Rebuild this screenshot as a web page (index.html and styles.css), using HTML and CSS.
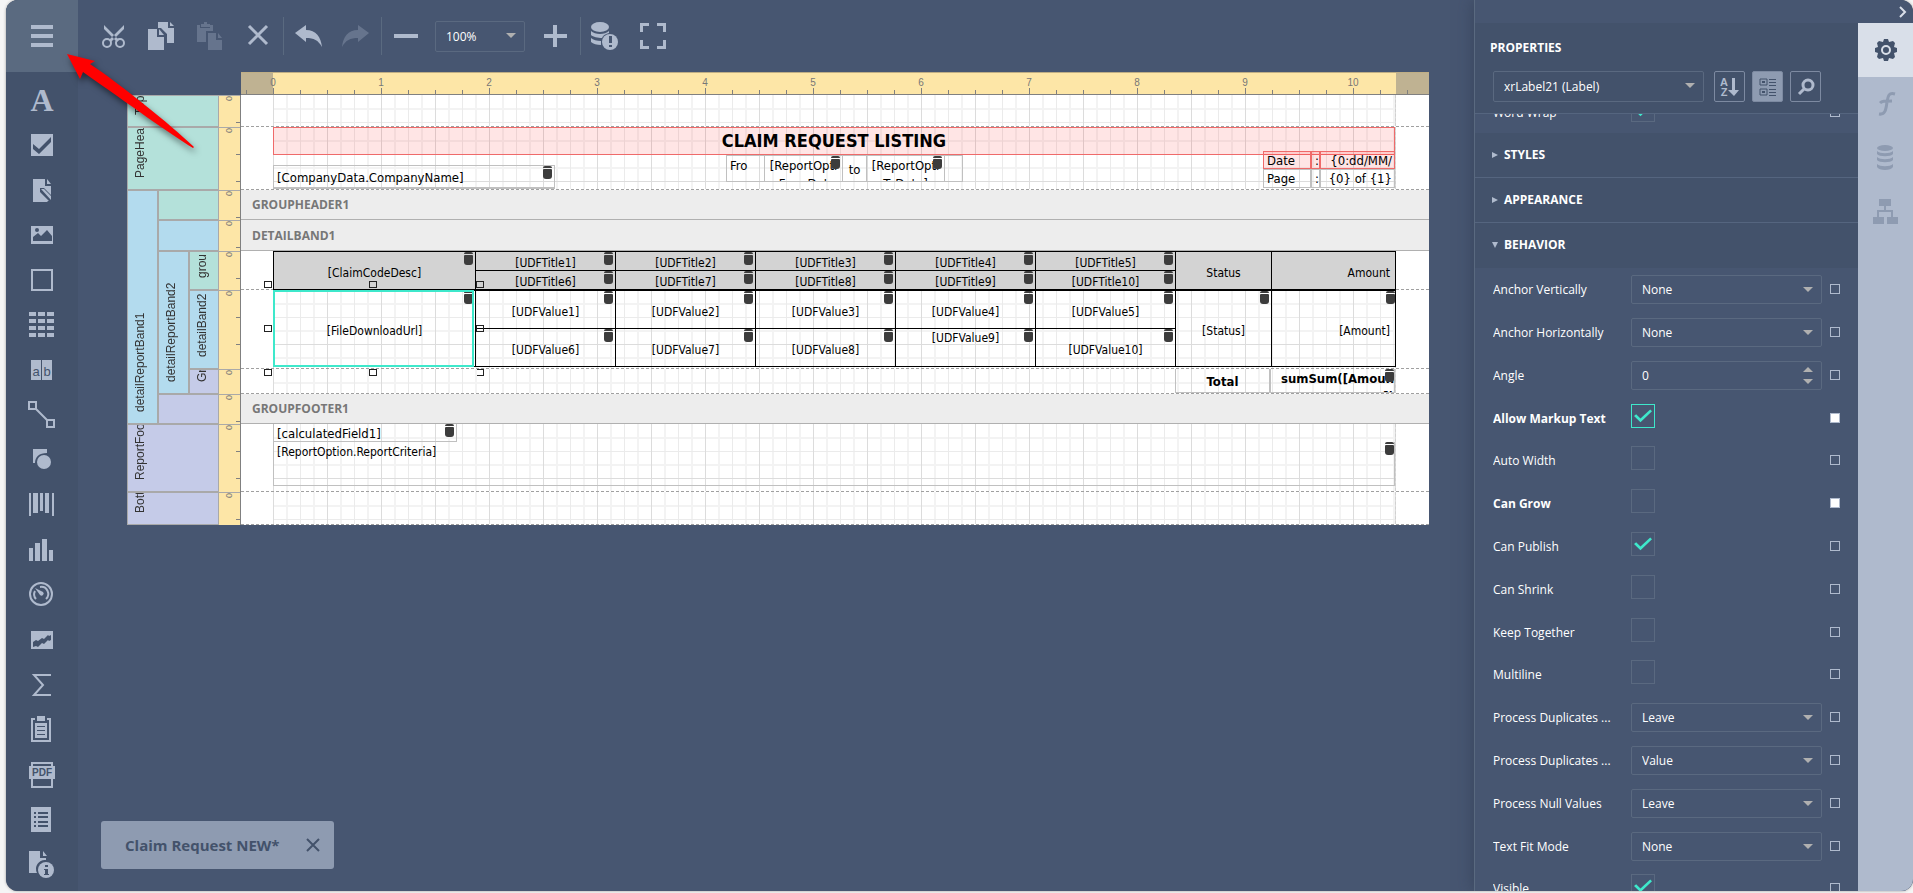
FILE: index.html
```
<!DOCTYPE html>
<html lang="en">
<head>
    <title>Report Designer</title>
    <meta charset="utf-8">
    <meta name="viewport" content="width=device-width, initial-scale=1.0">
    <link rel="stylesheet" href="styles.css">
</head>
<body>
    <div class="designer">
        <nav class="toolbox">
            <button class="menu-button" aria-label="Menu">
                <svg width="24" height="24" viewBox="0 0 24 24"><path d="M1 1h22v4H1zM1 10h22v4H1zM1 19h22v4H1z"/></svg>
            </button>
            <div class="tools">
                <button class="tool" aria-label="Label"><svg viewBox="0 0 28 28"><text class="glyph-a" x="14" y="25">A</text></svg></button>
                <button class="tool" aria-label="Check Box"><svg viewBox="0 0 28 28"><path d="M3 3h22v22H3z"/><path class="cut" d="M5 13l6 5 12-12v5L11 23l-6-5z"/></svg></button>
                <button class="tool" aria-label="Rich Text"><svg viewBox="0 0 28 28"><path d="M5 3h12v7h6v16H5z"/><path d="M19 3l4 5h-4z"/><path class="cut" d="M12 12h4l8 8v7h-3l-9-9z"/><path d="M13 13l3 0 7 7v4zM12 16l9 9h-4l-5-5z"/></svg></button>
                <button class="tool" aria-label="Picture Box"><svg viewBox="0 0 28 28"><path d="M3 5h22v18H3z"/><circle class="cut" cx="9" cy="9" r="2"/><path class="cut" d="M5 20v-4l5-4 3 3 6-6 5 6v5z"/></svg></button>
                <button class="tool" aria-label="Panel"><svg viewBox="0 0 28 28"><path class="line" d="M4 4h20v20H4z"/></svg></button>
                <button class="tool" aria-label="Table"><svg viewBox="0 0 28 28"><path d="M1 1h7v4H1zM10 1h7v4h-7zM19 1h7v4h-7zM1 8h7v4H1zM10 8h7v4h-7zM19 8h7v4h-7zM1 15h7v4H1zM10 15h7v4h-7zM19 15h7v4h-7zM1 22h7v4H1zM10 22h7v4h-7zM19 22h7v4h-7z"/></svg></button>
                <button class="tool" aria-label="Character Comb"><svg viewBox="0 0 28 28"><path d="M3 4h10v20H3zM14 4h10v20H14z"/><text class="glyph-s" x="8" y="20">a</text><text class="glyph-s" x="19" y="20">b</text></svg></button>
                <button class="tool" aria-label="Line"><svg viewBox="0 0 28 28"><path class="line" d="M1 1h7v7H1zM19 19h7v7h-7zM8 8l11 11"/></svg></button>
                <button class="tool" aria-label="Shape"><svg viewBox="0 0 28 28"><path d="M5 3h14v4C11 7 7 11 7 17H5z"/><circle cx="16" cy="16" r="7"/></svg></button>
                <button class="tool" aria-label="Bar Code"><svg viewBox="0 0 28 28"><path d="M1 2h2v23H1zM5 2h5v20H5zM12 2h3v18h-3zM17 2h4v20h-4zM24 2h2v23h-2z"/></svg></button>
                <button class="tool" aria-label="Chart"><svg viewBox="0 0 28 28"><path d="M1 12h4v13H1zM7 7h5v18H7zM14 3h5v22h-5zM21 14h4v11h-4z"/></svg></button>
                <button class="tool" aria-label="Gauge"><svg viewBox="0 0 28 28"><circle class="line" cx="13" cy="13" r="11"/><path class="line" d="M8 18a7 7 0 0 1-1-8M12 6a7 7 0 0 1 6 12"/><path d="M7 7l8 4a2 2 0 1 1-3 3z"/></svg></button>
                <button class="tool" aria-label="Sparkline"><svg viewBox="0 0 28 28"><path d="M3 5h22v18H3z"/><path class="cut" d="M5 16l3-2 2 1 4-3 2 1 4-4 1 1 2-1v5l-2 1-1-1-4 4-2-1-4 4-2-1-3 1z"/></svg></button>
                <button class="tool" aria-label="Sum"><svg viewBox="0 0 28 28"><path class="line" d="M23 4H6l9 10-9 10h17"/></svg></button>
                <button class="tool" aria-label="Page Summary"><svg viewBox="0 0 28 28"><path class="line" d="M7 3H4v22h18V3h-3"/><path d="M9 0h8v5H9zM7 7h12v15H7z"/><path class="cut" d="M9 10h8v1H9zM9 14h8v1H9zM9 18h8v1H9z"/></svg></button>
                <button class="tool" aria-label="PDF Content"><svg viewBox="0 0 28 28"><path class="line" d="M4 2h20v24H4z"/><path d="M1 5h26v13H1z"/><text class="glyph-p" x="14" y="15">PDF</text></svg></button>
                <button class="tool" aria-label="Table of Contents"><svg viewBox="0 0 28 28"><path d="M3 1h20v25H3z"/><path class="cut" d="M6 6h2v2H6zM10 6h10v2H10zM6 10h2v2H6zM10 10h10v2H10zM6 15h2v2H6zM10 15h10v2H10zM6 19h2v2H6zM10 19h10v2H10z"/></svg></button>
                <button class="tool" aria-label="Page Info"><svg viewBox="0 0 28 28"><path d="M1 0h11v7h6v2a9 9 0 0 0-9 13H1zM15 0l4 5h-4z"/><circle cx="18" cy="19" r="8"/><path class="cut" d="M17 14h3v2h-3zM16 18h4v5h1v1h-5v-1h1v-4h-1z"/></svg></button>
            </div>
        </nav>

        <main class="workspace">
            <div class="toolbar">
                <button class="action" aria-label="Cut"><svg viewBox="0 0 32 32"><circle class="line" cx="9" cy="23" r="4"/><circle class="line" cx="22" cy="23" r="4"/><path d="M6 5l13 13 2 2-2 2-5-5L6 9zM26 5L13 18l-2 2 2 2 5-5 8-8z"/></svg></button>
                <button class="action" aria-label="Copy"><svg viewBox="0 0 32 32"><path d="M12 2h10v6h6v15h-7V14l-6-6h-3zM24 2l4 4h-4z"/><path d="M2 9h9v8h7v13H2z"/><path d="M13 9l5 6h-5z"/></svg></button>
                <button class="action faded" aria-label="Paste"><svg viewBox="0 0 32 32"><path d="M3 5h3v3h10V5h3v6h-7v11H3zM7 4h3V2h3v2h3v3H7z"/><path d="M14 13h8v7h6v10H14zM24 13l4 5h-4z"/></svg></button>
                <button class="action" aria-label="Delete"><svg viewBox="0 0 32 32"><path class="bold-line" d="M7 6l18 18M25 6L7 24"/></svg></button>
                <span class="separator"></span>
                <button class="action" aria-label="Undo"><svg viewBox="0 0 32 32"><path d="M3 13l11-8v5c10 0 15 7 16 17-4-7-8-9-16-9v4z"/></svg></button>
                <button class="action faded" aria-label="Redo"><svg viewBox="0 0 32 32"><path d="M29 13L18 5v5C8 10 3 17 2 27c4-7 8-9 16-9v4z"/></svg></button>
                <span class="separator"></span>
                <button class="action" aria-label="Zoom Out"><svg viewBox="0 0 32 32"><path d="M4 14h24v4H4z"/></svg></button>
                <span class="select zoom">
                    <select aria-label="Zoom"><option>100%</option></select>
                </span>
                <button class="action" aria-label="Zoom In"><svg viewBox="0 0 32 32"><path d="M5 14h9V5h4v9h10v4H18v9h-4v-9H5z"/></svg></button>
                <span class="separator"></span>
                <button class="action" aria-label="Validate Bindings"><svg viewBox="0 0 32 32"><ellipse cx="11" cy="7" rx="9" ry="5"/><path d="M2 11c4 4 14 4 18 0v2c-3 1-6 2-7 5-4 0-9-1-11-3zM2 18c2 2 6 3 10 3v4c-4 0-8-1-10-3z"/><circle cx="21" cy="22" r="8"/><path class="cut-main" d="M20 16h3v7h-3zM20 25h3v2h-3z"/></svg></button>
                <button class="action" aria-label="Full Screen"><svg viewBox="0 0 32 32"><path d="M3 3h9v3H6v6H3zM20 3h9v9h-3V6h-6zM3 20h3v6h6v3H3zM26 20h3v9h-9v-3h6z"/></svg></button>
            </div>

            <div class="report">
                <div class="ruler-top">
                    <div class="numbers">
                        <span>0</span><span>1</span><span>2</span><span>3</span><span>4</span><span>5</span><span>6</span><span>7</span><span>8</span><span>9</span><span>10</span>
                    </div>
                </div>

                <div class="band-tree">
                    <div class="node header all row-1">Top</div>
                    <div class="node header all row-2">PageHea</div>
                    <div class="node detail first report-1">detailReportBand1</div>
                    <div class="node header rest row-3"></div>
                    <div class="node detail rest row-4"></div>
                    <div class="node detail second report-2">detailReportBand2</div>
                    <div class="node header third row-5">grou</div>
                    <div class="node detail third row-6">detailBand2</div>
                    <div class="node footer third row-7">Gr</div>
                    <div class="node footer rest row-8"></div>
                    <div class="node footer all row-9">ReportFoo</div>
                    <div class="node footer all row-10">Bott</div>
                </div>

                <div class="ruler-side">
                    <div><span>0</span></div>
                    <div><span>0</span></div>
                    <div><span>0</span></div>
                    <div><span>0</span></div>
                    <div><span>0</span></div>
                    <div><span>0</span></div>
                    <div><span>0</span></div>
                    <div><span>0</span></div>
                    <div><span>0</span></div>
                    <div><span>0</span></div>
                </div>

                <div class="surface">
                    <section class="band"><div class="grid"></div></section>

                    <section class="band">
                        <div class="grid">
                            <div class="item title invalid">CLAIM REQUEST LISTING</div>
                            <div class="item company bound">[CompanyData.CompanyName]</div>
                            <div class="item period">
                                <div class="from-label">Fro</div>
                                <div class="from bound">[ReportOpti<br>FromDat</div>
                                <div class="to-label">to</div>
                                <div class="to bound">[ReportOpti<br>ToDate]</div>
                            </div>
                            <div class="item page-info">
                                <div class="caption invalid">Date</div>
                                <div class="colon invalid">:</div>
                                <div class="value invalid">{0:dd/MM/</div>
                                <div class="caption">Page</div>
                                <div class="colon">:</div>
                                <div class="value">{0} of {1}</div>
                            </div>
                        </div>
                    </section>

                    <section class="band collapsed">GROUPHEADER1</section>
                    <section class="band collapsed">DETAILBAND1</section>

                    <section class="band">
                        <div class="grid">
                            <table class="item fields titles">
                                <colgroup><col class="code"><col class="udf"><col class="udf"><col class="udf"><col class="udf"><col class="udf"><col class="status"><col></colgroup>
                                <tr>
                                    <th rowspan="2" class="bound">[ClaimCodeDesc]</th>
                                    <th class="bound">[UDFTitle1]</th>
                                    <th class="bound">[UDFTitle2]</th>
                                    <th class="bound">[UDFTitle3]</th>
                                    <th class="bound">[UDFTitle4]</th>
                                    <th class="bound">[UDFTitle5]</th>
                                    <th rowspan="2">Status</th>
                                    <th rowspan="2" class="amount">Amount</th>
                                </tr>
                                <tr>
                                    <th class="bound">[UDFTitle6]</th>
                                    <th class="bound">[UDFTitle7]</th>
                                    <th class="bound">[UDFTitle8]</th>
                                    <th class="bound">[UDFTitle9]</th>
                                    <th class="bound">[UDFTitle10]</th>
                                </tr>
                            </table>
                        </div>
                    </section>

                    <section class="band">
                        <div class="grid">
                            <table class="item fields values">
                                <colgroup><col class="code"><col class="udf"><col class="udf"><col class="udf"><col class="udf"><col class="udf"><col class="status"><col></colgroup>
                                <tr>
                                    <td rowspan="2" class="bound">[FileDownloadUrl]</td>
                                    <td class="bound">[UDFValue1]</td>
                                    <td class="bound">[UDFValue2]</td>
                                    <td class="bound">[UDFValue3]</td>
                                    <td class="bound">[UDFValue4]</td>
                                    <td class="bound">[UDFValue5]</td>
                                    <td rowspan="2" class="bound">[Status]</td>
                                    <td rowspan="2" class="bound amount">[Amount]</td>
                                </tr>
                                <tr>
                                    <td class="bound">[UDFValue6]</td>
                                    <td class="bound">[UDFValue7]</td>
                                    <td class="bound">[UDFValue8]</td>
                                    <td class="bound upper">[UDFValue9]</td>
                                    <td class="bound">[UDFValue10]</td>
                                </tr>
                            </table>
                            <div class="selection">
                                <i class="handle top left"></i><i class="handle top center"></i><i class="handle top right"></i>
                                <i class="handle middle left"></i><i class="handle middle right"></i>
                                <i class="handle bottom left"></i><i class="handle bottom center"></i><i class="handle bottom right"></i>
                            </div>
                        </div>
                    </section>

                    <section class="band">
                        <div class="grid">
                            <div class="item total">
                                <div class="total-label">Total</div>
                                <div class="total-value bound">sumSum([Amoun<br>t])</div>
                            </div>
                        </div>
                    </section>

                    <section class="band collapsed">GROUPFOOTER1</section>

                    <section class="band">
                        <div class="grid">
                            <div class="item calculated bound">[calculatedField1]</div>
                            <div class="item criteria bound">[ReportOption.ReportCriteria]</div>
                        </div>
                    </section>

                    <section class="band"><div class="grid"></div></section>
                </div>
            </div>

            <div class="report-tabs">
                <div class="report-tab">
                    <span>Claim Request NEW*</span>
                    <button aria-label="Close"><svg width="14" height="14" viewBox="0 0 14 14"><path d="M1 1l12 12M13 1L1 13"/></svg></button>
                </div>
            </div>
        </main>

        <aside class="side">
            <div class="side-top">
                <button aria-label="Collapse"><svg width="8" height="12" viewBox="0 0 8 12"><path d="M1 1l5 5-5 5"/></svg></button>
            </div>
            <div class="properties">
                <header>
                    <h2>PROPERTIES</h2>
                    <div class="chooser">
                        <span class="select element">
                            <select aria-label="Element"><option>xrLabel21 (Label)</option></select>
                        </span>
                        <button aria-label="Sort"><svg viewBox="0 0 20 20"><text x="4" y="9">A</text><text x="4" y="19">Z</text><path d="M12 1h3v12h4l-5 6-6-6h4z"/></svg></button>
                        <button class="on" aria-label="Categories"><svg viewBox="0 0 20 20"><path class="thin" d="M2 2h7v6H2zM2 12h7v6H2z"/><path d="M4 4h3v2H4zM4 14h3v2H4zM11 2h7v1h-7zM11 5h7v1h-7zM11 8h7v1h-7zM11 12h7v1h-7zM11 15h7v1h-7zM11 18h7v1h-7z"/></svg></button>
                        <button aria-label="Search"><svg viewBox="0 0 20 20"><circle cx="12" cy="8" r="5"/><path class="thick" d="M8 12l-5 5"/></svg></button>
                    </div>
                </header>
                <div class="groups">
                    <div class="row word-wrap"><label for="wrap">Word Wrap</label><input type="checkbox" id="wrap" checked><button class="marker" aria-label="Options"></button></div>
                    <h3 class="closed">STYLES</h3>
                    <h3 class="closed">APPEARANCE</h3>
                    <h3 class="open">BEHAVIOR</h3>
                    <div class="rows">
                        <div class="row"><label for="anchor-v">Anchor Vertically</label><span class="select"><select id="anchor-v"><option>None</option></select></span><button class="marker" aria-label="Options"></button></div>
                        <div class="row"><label for="anchor-h">Anchor Horizontally</label><span class="select"><select id="anchor-h"><option>None</option></select></span><button class="marker" aria-label="Options"></button></div>
                        <div class="row"><label for="angle">Angle</label><span class="select spin"><input type="text" id="angle" value="0"></span><button class="marker" aria-label="Options"></button></div>
                        <div class="row changed"><label for="markup">Allow Markup Text</label><input type="checkbox" class="focused" id="markup" checked><button class="marker" aria-label="Options"></button></div>
                        <div class="row"><label for="auto-width">Auto Width</label><input type="checkbox" id="auto-width"><button class="marker" aria-label="Options"></button></div>
                        <div class="row changed"><label for="grow">Can Grow</label><input type="checkbox" id="grow"><button class="marker" aria-label="Options"></button></div>
                        <div class="row"><label for="publish">Can Publish</label><input type="checkbox" id="publish" checked><button class="marker" aria-label="Options"></button></div>
                        <div class="row"><label for="shrink">Can Shrink</label><input type="checkbox" id="shrink"><button class="marker" aria-label="Options"></button></div>
                        <div class="row"><label for="keep">Keep Together</label><input type="checkbox" id="keep"><button class="marker" aria-label="Options"></button></div>
                        <div class="row"><label for="multiline">Multiline</label><input type="checkbox" id="multiline"><button class="marker" aria-label="Options"></button></div>
                        <div class="row"><label for="dup-mode">Process Duplicates ...</label><span class="select"><select id="dup-mode"><option>Leave</option></select></span><button class="marker" aria-label="Options"></button></div>
                        <div class="row"><label for="dup-target">Process Duplicates ...</label><span class="select"><select id="dup-target"><option>Value</option></select></span><button class="marker" aria-label="Options"></button></div>
                        <div class="row"><label for="nulls">Process Null Values</label><span class="select"><select id="nulls"><option>Leave</option></select></span><button class="marker" aria-label="Options"></button></div>
                        <div class="row"><label for="fit">Text Fit Mode</label><span class="select"><select id="fit"><option>None</option></select></span><button class="marker" aria-label="Options"></button></div>
                        <div class="row"><label for="visible">Visible</label><input type="checkbox" id="visible" checked><button class="marker" aria-label="Options"></button></div>
                    </div>
                </div>
            </div>
            <div class="side-tabs">
                <button class="current" aria-label="Properties"><svg viewBox="0 0 28 28"><path d="M12 3h4l1 3 4-1 2 2-1 4 3 1v4l-3 1 1 4-2 2-4-1-1 3h-4l-1-3-4 1-2-2 1-4-3-1v-4l3-1-1-4 2-2 4 1z"/><circle class="hole" cx="14" cy="14" r="4"/></svg></button>
                <button aria-label="Expressions"><svg viewBox="0 0 28 28"><path class="stroke" d="M23 4c-7-2-7 3-8 8-1 8-2 13-8 12M8 13c2-2 4-2 12-2"/></svg></button>
                <button aria-label="Field List"><svg viewBox="0 0 28 28"><ellipse cx="13" cy="4" rx="8" ry="3"/><path d="M5 7c3 3 13 3 16 0v3c-2 3-14 3-16 0zM5 13c3 3 13 3 16 0v3c-2 3-14 3-16 0zM5 20c3 3 13 3 16 0v3c-2 4-14 4-16 0z"/></svg></button>
                <button aria-label="Report Explorer"><svg viewBox="0 0 28 28"><path d="M7 1h12v7H7zM1 19h11v7H1zM15 19h11v7H15z"/><path class="thin" d="M13 8v5M6 19v-6h14v6"/></svg></button>
            </div>
        </aside>

        <svg class="arrow" width="140" height="110" viewBox="0 0 140 110"><path d="M7 4l28 7-5 3c30 20 80 60 104 83l-1 1C110 84 70 55 23 22l-3 7z"/></svg>
    </div>
</body>
</html>
```

FILE: styles.css
```
* {
    box-sizing: border-box;
}
body {
    margin: 0;
    height: 100vh;
    overflow: hidden;
    padding: 0 0 2px 6px;
    background-color: #f5f5f5;
    font-family: "Open Sans", "Noto Sans", sans-serif;
    font-size: 12px;
    color: #fff;
}
button {
    margin: 0;
    padding: 0;
    border: 0;
    background: none;
    cursor: pointer;
}
svg {
    display: block;
    fill: #afbacd;
}
.designer {
    position: relative;
    display: flex;
    height: 100%;
    overflow: hidden;
    border-radius: 12px;
    background-color: #475671;
    box-shadow: 0 0 3px #999;
}

/* left toolbox */
.toolbox {
    flex: none;
    width: 72px;
    background-color: #43526b;
}
.menu-button {
    display: flex;
    justify-content: center;
    align-items: center;
    width: 72px;
    height: 72px;
    background-color: #5a6a80;
}
.tools {
    display: flex;
    flex-direction: column;
    padding-top: 5px;
}
.tool {
    display: flex;
    justify-content: center;
    align-items: center;
    height: 45px;
}
.tool svg {
    width: 28px;
    height: 28px;
    overflow: visible;
}
.line {
    fill: none;
    stroke: #afbacd;
    stroke-width: 2;
}
.cut {
    fill: #43526b;
}
.cut-main {
    fill: #475671;
}
.glyph-a,
.glyph-s,
.glyph-p {
    text-anchor: middle;
    font: bold 32px "Liberation Serif", serif;
}
.glyph-s {
    fill: #43526b;
    font: 13px "Liberation Sans", sans-serif;
}
.glyph-p {
    fill: #43526b;
    font: bold 10px "Liberation Sans", sans-serif;
}

/* toolbar */
.workspace {
    flex: 1;
    min-width: 0;
    display: flex;
    flex-direction: column;
}
.toolbar {
    flex: none;
    display: flex;
    align-items: center;
    height: 72px;
    padding-left: 12px;
}
.action {
    display: flex;
    justify-content: center;
    width: 48px;
}
.action svg {
    width: 32px;
    height: 32px;
}
.faded {
    opacity: 0.3;
}
.bold-line {
    stroke: #afbacd;
    stroke-width: 3;
}
.separator {
    width: 1px;
    height: 38px;
    margin-left: 1px;
    background-color: #5a6a80;
}
.select {
    position: relative;
    display: block;
}
.select select,
.select input {
    display: block;
    width: 100%;
    height: 29px;
    padding: 0 10px;
    border: 1px solid #5a6980;
    border-radius: 2px;
    appearance: none;
    background: none;
    font: inherit;
    color: #fff;
    outline: none;
}
.select::after,
.spin::before {
    content: "";
    position: absolute;
    right: 9px;
    top: 12px;
    border: 5px solid transparent;
    border-top-color: #b0b0b0;
    border-bottom: 0;
}
.spin::after {
    top: 18px;
}
.spin::before {
    top: 6px;
    border: 5px solid transparent;
    border-top: 0;
    border-bottom-color: #b0b0b0;
}
.zoom {
    width: 90px;
    margin: 0 6px 0 5px;
}
.zoom select {
    height: 31px;
}

/* report */
.report {
    flex: none;
    display: grid;
    grid-template-columns: 92px 22px 1188px;
    grid-template-rows: 23px auto;
    width: 1302px;
    margin-left: 49px;
}
.ruler-top {
    grid-column: 3;
    overflow: hidden;
    border-top: 1px solid #bfae85;
    border-bottom: 1px solid #808080;
    background:
        linear-gradient(90deg, #bfb292 32px, transparent 32px 1155px, #bfb292 1155px),
        #fde6a7;
}
.numbers {
    display: flex;
    width: 1210px;
    height: 21px;
    margin-left: -22px;
    background:
        repeating-linear-gradient(90deg, transparent 0 54px, #808080 54px 55px, transparent 55px 108px) 0 100% / 100% 6px no-repeat,
        repeating-linear-gradient(90deg, #808080 0 1px, transparent 1px 27px) 0 100% / 100% 4px no-repeat;
}
.numbers span {
    width: 108px;
    text-align: center;
    font: 10px/20px "Liberation Sans", sans-serif;
    color: #777;
}
.band-tree,
.ruler-side,
.surface {
    display: grid;
    grid-template-rows: 32px 63px 30px 31px 39px 79px 25px 30px 68px 33px;
}
.band-tree {
    grid-column: 1;
    grid-template-columns: 31px 31px 30px;
}
.node {
    overflow: hidden;
    padding: 12px 6px 0 0;
    outline: 1px solid #a9a9a9;
    outline-offset: -1px;
    writing-mode: vertical-rl;
    transform: rotate(180deg);
    white-space: nowrap;
    font: 12px/15px "Liberation Sans", sans-serif;
    color: #333;
}
.header {
    background-color: #b4e1da;
}
.detail {
    background-color: #b3dbee;
}
.footer {
    background-color: #c5cbe8;
}
.all {
    grid-column: 1 / 4;
}
.first {
    grid-column: 1;
}
.second {
    grid-column: 2;
}
.third {
    grid-column: 3;
}
.rest {
    grid-column: 2 / 4;
}
.report-1 {
    grid-row: 3 / 9;
}
.report-2 {
    grid-row: 5 / 8;
}
.row-1 { grid-row: 1; }
.row-2 { grid-row: 2; }
.row-3 { grid-row: 3; }
.row-4 { grid-row: 4; }
.row-5 { grid-row: 5; }
.row-6 { grid-row: 6; }
.row-7 { grid-row: 7; }
.row-8 { grid-row: 8; }
.row-9 { grid-row: 9; }
.row-10 { grid-row: 10; }
.ruler-side {
    border-right: 1px solid #808080;
    background-color: #fde6a7;
}
.ruler-side div {
    overflow: hidden;
    border-top: 1px solid #a9a9a9;
    background: repeating-linear-gradient(transparent 0 26px, #808080 26px 27px) 100% 0 / 4px 100% no-repeat;
}
.ruler-side span {
    display: block;
    width: 10px;
    height: 8px;
    font: 9px/1px "Liberation Sans", sans-serif;
    writing-mode: vertical-rl;
    color: #777;
}
.surface {
    background-color: #fff;
    font-family: "DejaVu Sans Condensed", "Noto Sans", sans-serif;
    color: #000;
}
.band {
    padding: 0 33px 0 32px;
    border-bottom: 1px dashed #a0a0a0;
}
.collapsed {
    display: flex;
    align-items: center;
    padding: 0 11px;
    border-bottom: 1px solid #b0b0b0;
    background-color: #ededed;
    font: bold 12px "Open Sans", "Noto Sans", sans-serif;
    color: #777;
}
.grid {
    position: relative;
    height: 100%;
    border-right: 1px dashed #d0d0d0;
    background:
        repeating-linear-gradient(90deg, #dcdcdc 0 1px, transparent 1px 54px),
        repeating-linear-gradient(transparent 0 54px, #dcdcdc 54px 55px, transparent 55px 108px),
        repeating-linear-gradient(90deg, #ebebeb 0 1px, transparent 1px 27px),
        repeating-linear-gradient(transparent 0 27px, #ebebeb 27px 28px, transparent 28px 54px),
        repeating-linear-gradient(90deg, transparent 0 13px, #f3f3f3 13px 15px, transparent 15px 27px),
        repeating-linear-gradient(transparent 0 13px, #f3f3f3 13px 15px, transparent 15px 27px);
}

/* items placed on the report canvas */
.item {
    position: absolute;
    font-size: 13px;
}
.bound {
    position: relative;
}
.item.bound {
    position: absolute;
}
.bound::before,
.bound::after {
    content: "";
    position: absolute;
    right: 2px;
    top: 0;
    width: 9px;
    height: 2px;
    border-radius: 2px 2px 0 0;
    background-color: #3c3c3c;
}
.bound::after {
    top: 3px;
    height: 10px;
    border-radius: 1px 1px 3px 3px;
}
.amount::before,
.amount::after,
.criteria::before,
.criteria::after,
.total-value::before,
.total-value::after {
    right: 0;
}
.title {
    left: 0;
    right: 0;
    top: 0;
    height: 28px;
    border: 1px solid #ef6a6a;
    background-color: rgba(255, 0, 0, 0.1);
    text-align: center;
    font-size: 18px;
    font-weight: bold;
    line-height: 26px;
}
.company {
    left: 0;
    top: 38px;
    width: 282px;
    height: 24px;
    padding-left: 3px;
    border: 1px solid #c0c0c0;
    border-bottom-width: 2px;
    line-height: 24px;
}
.period {
    left: 453px;
    top: 28px;
    display: flex;
    width: 237px;
    height: 27px;
    border: 1px solid #c0c0c0;
    line-height: 18px;
}
.period div {
    overflow: hidden;
    padding: 1px 3px 0;
    border-right: 1px solid #c0c0c0;
    white-space: nowrap;
}
.period .from-label {
    width: 38px;
}
.period .from,
.period .to {
    width: 78px;
    text-align: center;
}
.period .to-label {
    width: 24px;
    line-height: 26px;
    text-align: center;
}
.page-info {
    right: 0;
    top: 24px;
    display: grid;
    grid-template-columns: 48px 9px 75px;
    grid-template-rows: 18px 19px;
    line-height: 18px;
}
.page-info div {
    overflow: hidden;
    border: 1px solid #c0c0c0;
    white-space: nowrap;
}
.page-info .invalid {
    border-color: #ef6a6a;
    background-color: rgba(255, 0, 0, 0.1);
}
.page-info .caption {
    padding-left: 3px;
}
.page-info .colon {
    padding-left: 3px;
}
.page-info .value {
    padding: 0 2px;
    text-align: right;
}
.fields {
    left: 0;
    top: 0;
    width: 1123px;
    table-layout: fixed;
    border-collapse: collapse;
    font-size: 12px;
    line-height: 14px;
}
.fields th,
.fields td {
    padding: 4px 0 0;
    border: 1px solid #000;
    text-align: center;
    font-weight: normal;
}
.fields .amount {
    padding-right: 5px;
    text-align: right;
}
.titles {
    background-color: #d3d3d3;
}
.titles tr {
    height: 19px;
}
.values tr {
    height: 38px;
}
.fields .upper {
    padding-top: 2px;
    vertical-align: top;
}
.code {
    width: 202px;
}
.udf {
    width: 140px;
}
.status {
    width: 96px;
}
.selection {
    position: absolute;
    left: 0;
    top: 0;
    width: 201px;
    height: 77px;
    border: 2px solid #3ee8cb;
}
.handle {
    position: absolute;
    width: 8px;
    height: 7px;
    border: 1px solid #222;
}
.handle.left {
    left: -11px;
    background-color: #fff;
}
.handle.center {
    left: 94px;
}
.handle.right {
    right: -12px;
}
.handle.top {
    top: -11px;
}
.handle.middle {
    top: 33px;
}
.handle.bottom {
    bottom: -11px;
}
.total {
    right: 0;
    top: 0;
    display: grid;
    grid-template-columns: 95px 125px;
    height: 24px;
    font-weight: bold;
}
.total div {
    overflow: hidden;
    border: 1px solid #c0c0c0;
    border-top: 0;
    white-space: nowrap;
}
.total-label {
    line-height: 26px;
    text-align: center;
}
.total-value {
    padding: 1px 0 0 4px;
    line-height: 18px;
    text-align: right;
}
.calculated {
    left: 0;
    top: 0;
    width: 184px;
    height: 18px;
    padding-left: 3px;
    border: 1px solid #c0c0c0;
    border-top: 0;
    line-height: 20px;
}
.criteria {
    left: 0;
    right: 0;
    top: 18px;
    height: 44px;
    padding-left: 3px;
    border: 1px solid #c0c0c0;
    border-top: 0;
    font-size: 12px;
    line-height: 20px;
}

/* open reports */
.report-tabs {
    display: flex;
    margin-top: auto;
    padding: 0 23px 22px;
}
.report-tab {
    display: flex;
    align-items: center;
    gap: 26px;
    height: 48px;
    padding: 0 14px 0 24px;
    border-radius: 3px;
    background-color: #8e9bb1;
    font-size: 15px;
    font-weight: bold;
    color: #43526b;
}
.report-tab svg {
    stroke: #43526b;
    stroke-width: 2;
}

/* properties panel */
.side {
    flex: none;
    display: grid;
    grid-template-columns: 1fr 55px;
    grid-template-rows: 23px minmax(0, 1fr);
    width: 439px;
    border-left: 1px solid #5a6a80;
    background-color: #475671;
    box-shadow: 0 0 16px rgba(40, 50, 70, 0.5);
}
.side-top {
    grid-column: 1 / 3;
    display: flex;
    justify-content: flex-end;
    padding-right: 6px;
}
.side-top svg {
    fill: none;
    stroke: #d9dfe9;
    stroke-width: 2;
}
.properties {
    display: flex;
    flex-direction: column;
    min-height: 0;
}
.properties header {
    flex: none;
    height: 91px;
    padding: 16px 15px 0;
    border-bottom: 1px solid #55657f;
    background-color: #43526b;
}
.properties h2,
.properties h3 {
    margin: 0;
    font-size: 12px;
    line-height: 18px;
}
.chooser {
    display: flex;
    gap: 7px;
    padding: 14px 0 0 3px;
}
.element {
    width: 211px;
    margin-right: 3px;
}
.chooser select {
    height: 31px;
}
.chooser button {
    display: flex;
    justify-content: center;
    align-items: center;
    width: 31px;
    height: 31px;
    border: 1px solid #7d8aa1;
    border-radius: 2px;
}
.chooser svg {
    width: 20px;
    height: 20px;
}
.chooser text {
    text-anchor: middle;
    font: bold 11px "Liberation Sans", sans-serif;
}
.chooser circle {
    fill: none;
    stroke: #afbacd;
    stroke-width: 3;
}
.thick {
    stroke: #afbacd;
    stroke-width: 3;
}
.chooser .on {
    background-color: #8e9bb1;
}
.on svg {
    fill: #43526b;
}
.on .thin {
    fill: none;
    stroke: #43526b;
}
.groups {
    overflow: hidden;
}
.properties h3 {
    display: flex;
    align-items: center;
    gap: 6px;
    height: 45px;
    padding-left: 17px;
    border-bottom: 1px solid #55657f;
    background-color: #43526b;
}
.properties h3.open {
    border-bottom-color: #43526b;
}
.properties h3::before {
    content: "";
    border: 3px solid transparent;
    border-left: 6px solid #afbacd;
    border-right: 0;
}
.properties h3.open::before {
    border: 3px solid transparent;
    border-top: 6px solid #afbacd;
    border-bottom: 0;
}
.rows {
    display: grid;
    grid-auto-rows: 43px 43px 43px 42px 43px;
}
.row {
    display: grid;
    grid-template-columns: 130px 191px 10px;
    column-gap: 8px;
    align-items: start;
    padding: 7px 18px 0;
}
.word-wrap {
    height: 42px;
    margin-top: -23px;
}
.row label {
    overflow: hidden;
    line-height: 30px;
    white-space: nowrap;
}
.changed label {
    font-weight: bold;
}
.row input[type="checkbox"] {
    width: 24px;
    height: 24px;
    margin: 0;
    border: 1px solid #5a6980;
    appearance: none;
}
.row input:checked::before {
    content: "";
    display: block;
    width: 18px;
    height: 14px;
    margin: 4px 2px;
    background-color: #3ee8cb;
    clip-path: polygon(0 50%, 12% 38%, 36% 68%, 90% 4%, 100% 16%, 36% 94%);
}
.row input.focused {
    border-color: #3ee8cb;
}
.marker {
    width: 10px;
    height: 10px;
    margin-top: 9px;
    border: 1px solid #afbacd;
}
.changed .marker {
    background-color: #fff;
}
.side-tabs {
    display: flex;
    flex-direction: column;
    background-color: #afbacd;
}
.side-tabs button {
    display: flex;
    justify-content: center;
    align-items: center;
    height: 54px;
}
.side-tabs svg {
    width: 28px;
    height: 28px;
    fill: #8e9bb1;
}
.side-tabs .current {
    background-color: #d9dfe9;
}
.side-tabs .current svg {
    fill: #43526b;
}
.side-tabs .hole {
    fill: #43526b;
    stroke: #d9dfe9;
    stroke-width: 2;
}
.side-tabs .stroke,
.side-tabs .thin {
    fill: none;
    stroke: #8e9bb1;
    stroke-width: 3;
}
.side-tabs .thin {
    stroke-width: 2;
}
.arrow {
    position: absolute;
    left: 54px;
    top: 50px;
    fill: #f00;
    filter: drop-shadow(2px 4px 3px rgba(0, 0, 0, 0.5));
}
```
